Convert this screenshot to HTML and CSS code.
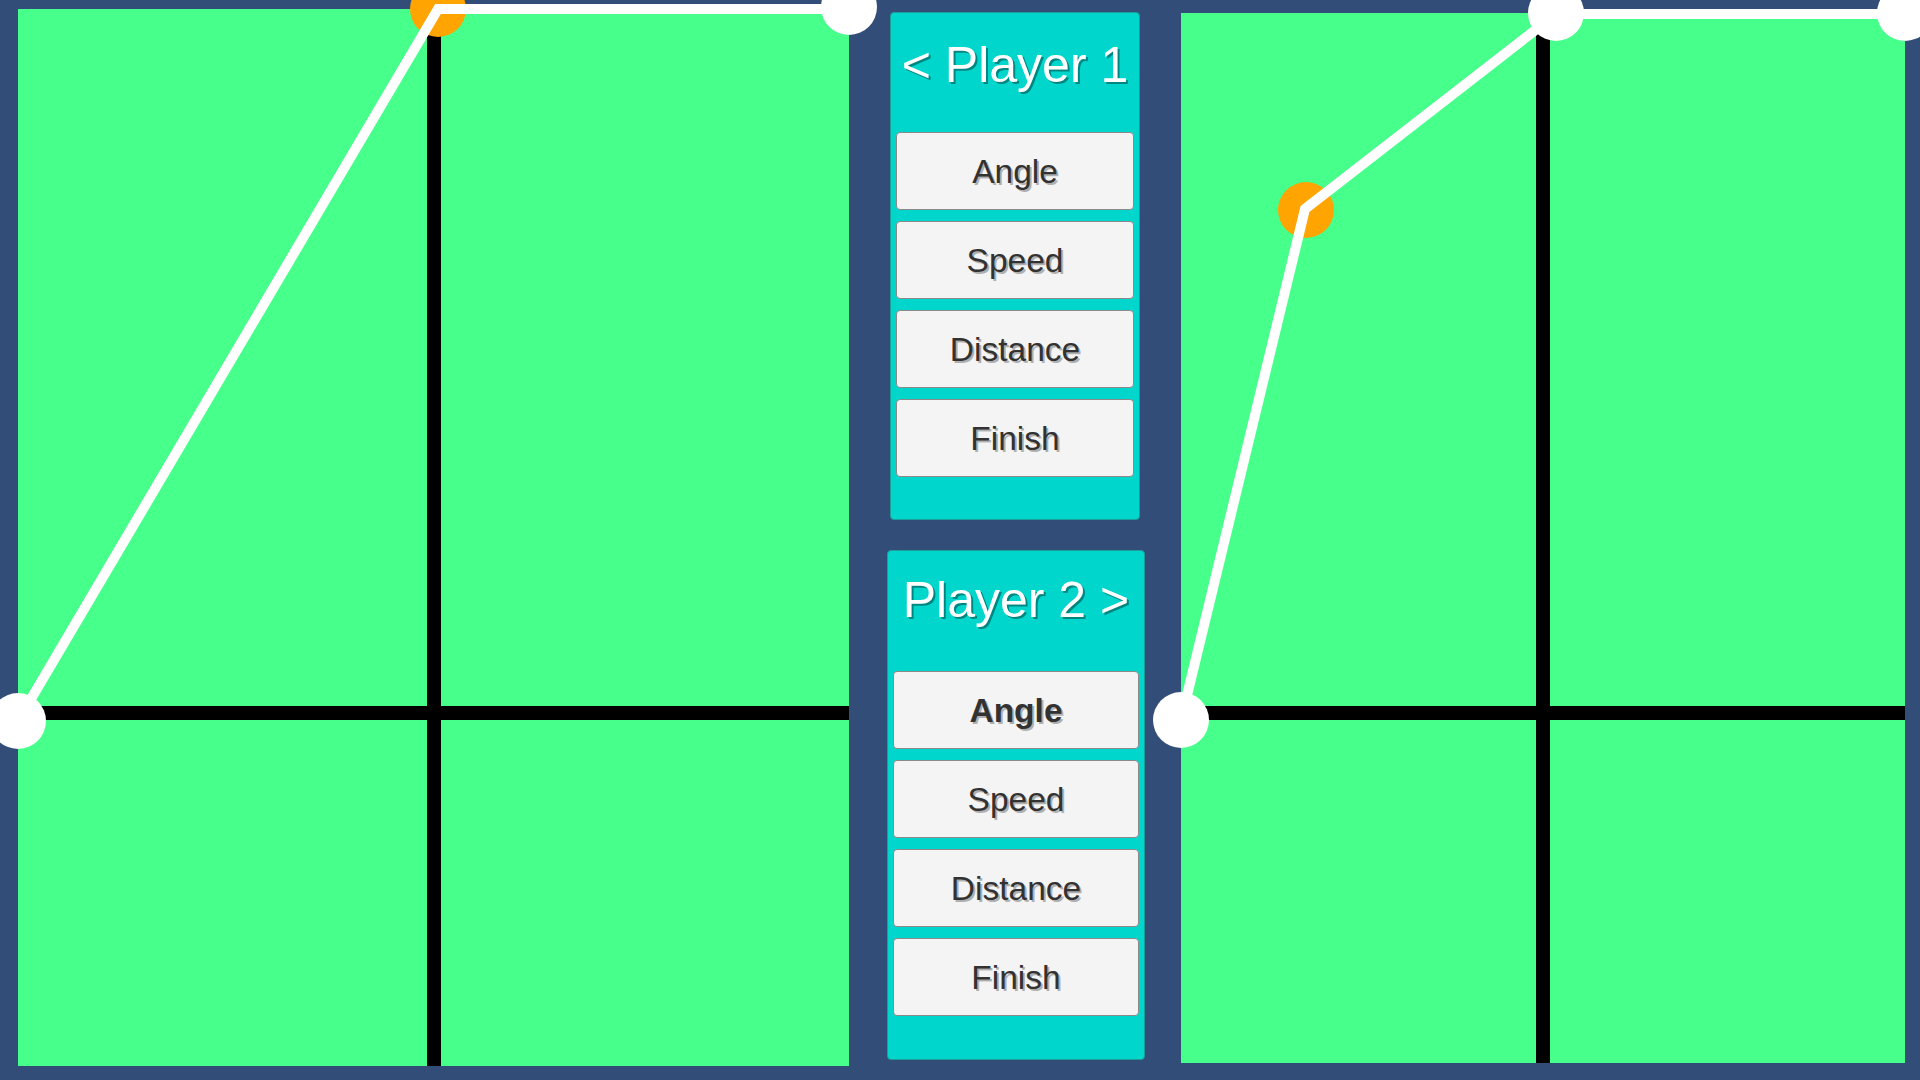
FILE: index.html
```html
<!DOCTYPE html>
<html lang="en">
<head>
<meta charset="utf-8">
<title>Players</title>
<link rel="stylesheet" href="styles.css">
</head>
<body>
<main class="stage">
  <section class="field field-left">
    <div class="cell"></div><div class="cell"></div>
    <div class="cell"></div><div class="cell"></div>
  </section>

  <section class="middle">
    <div class="panel panel-one">
      <h2 class="title title-one">&lt; Player 1</h2>
      <div class="buttons">
        <button class="btn">Angle</button>
        <button class="btn">Speed</button>
        <button class="btn">Distance</button>
        <button class="btn">Finish</button>
      </div>
    </div>
    <div class="panel panel-two">
      <h2 class="title title-two">Player 2 &gt;</h2>
      <div class="buttons">
        <button class="btn btn-active">Angle</button>
        <button class="btn">Speed</button>
        <button class="btn">Distance</button>
        <button class="btn">Finish</button>
      </div>
    </div>
  </section>

  <section class="field field-right">
    <div class="cell"></div><div class="cell"></div>
    <div class="cell"></div><div class="cell"></div>
  </section>

  <svg class="curves" width="1920" height="1080" viewBox="0 0 1920 1080">
    <circle cx="438" cy="9" r="28" fill="#ffa400"/>
    <circle cx="1306" cy="210" r="28" fill="#ffa400"/>
    <polyline points="18,721 438,9 849,9" fill="none" stroke="#ffffff" stroke-width="10" stroke-linejoin="miter"/>
    <polyline points="1181,720 1305,209 1556,14 1905,14" fill="none" stroke="#ffffff" stroke-width="10" stroke-linejoin="miter"/>
    <circle cx="18" cy="721" r="28" fill="#ffffff"/>
    <circle cx="849" cy="7" r="28" fill="#ffffff"/>
    <circle cx="1181" cy="720" r="28" fill="#ffffff"/>
    <circle cx="1556" cy="13" r="28" fill="#ffffff"/>
    <circle cx="1905" cy="13" r="28" fill="#ffffff"/>
  </svg>
</main>
</body>
</html>
```

FILE: styles.css
```css
html, body {
  margin: 0;
  padding: 0;
  width: 1920px;
  height: 1080px;
  overflow: hidden;
  background: #314d78;
  font-family: "Liberation Sans", Arial, sans-serif;
}

.stage {
  position: relative;
  display: flex;
  align-items: flex-start;
  width: 1920px;
  height: 1080px;
  background: #314d78;
}

.field {
  display: grid;
  gap: 14px;
  background: #000000;
}

.field-left {
  margin-left: 18px;
  margin-top: 9px;
  width: 831px;
  height: 1057px;
  grid-template-columns: 1fr 1fr;
  grid-template-rows: 697px 1fr;
}

.field-right {
  margin-top: 13px;
  width: 724px;
  height: 1050px;
  grid-template-columns: 1fr 1fr;
  grid-template-rows: 693px 1fr;
}

.cell {
  background: #47ff8b;
}

.middle {
  width: 332px;
  display: flex;
  flex-direction: column;
  align-items: flex-start;
}

.panel {
  box-sizing: border-box;
  background: #00d6cc;
  border: 1px solid #1b9e98;
  border-radius: 4px;
  display: flex;
  flex-direction: column;
}

.panel-one {
  margin-left: 41px;
  margin-top: 12px;
  width: 250px;
  height: 508px;
  padding: 0 5px;
}

.panel-two {
  margin-left: 38px;
  margin-top: 30px;
  width: 258px;
  height: 510px;
  padding: 0 5px;
}

.title {
  margin: 0;
  box-sizing: border-box;
  font-weight: normal;
  font-size: 50px;
  line-height: 56px;
  color: #ffffff;
  text-align: center;
  white-space: nowrap;
  text-shadow: 2px 2px 0 rgba(0, 70, 66, 0.55);
}

.title-one {
  height: 119px;
  padding-top: 24px;
}

.title-two {
  height: 120px;
  padding-top: 21px;
}

.buttons {
  display: flex;
  flex-direction: column;
  gap: 11px;
}

.btn {
  box-sizing: border-box;
  height: 78px;
  width: 100%;
  margin: 0;
  padding: 0;
  background: #f4f4f4;
  border: 1px solid #8a8a8a;
  border-radius: 4px;
  font-family: "Liberation Sans", Arial, sans-serif;
  font-size: 33.5px;
  line-height: 1;
  padding-top: 2px;
  color: #323232;
  text-shadow: 2px 2px 0 rgba(0, 0, 0, 0.28);
}

.btn-active {
  font-weight: bold;
}

.curves {
  position: absolute;
  left: 0;
  top: 0;
  pointer-events: none;
}
```
